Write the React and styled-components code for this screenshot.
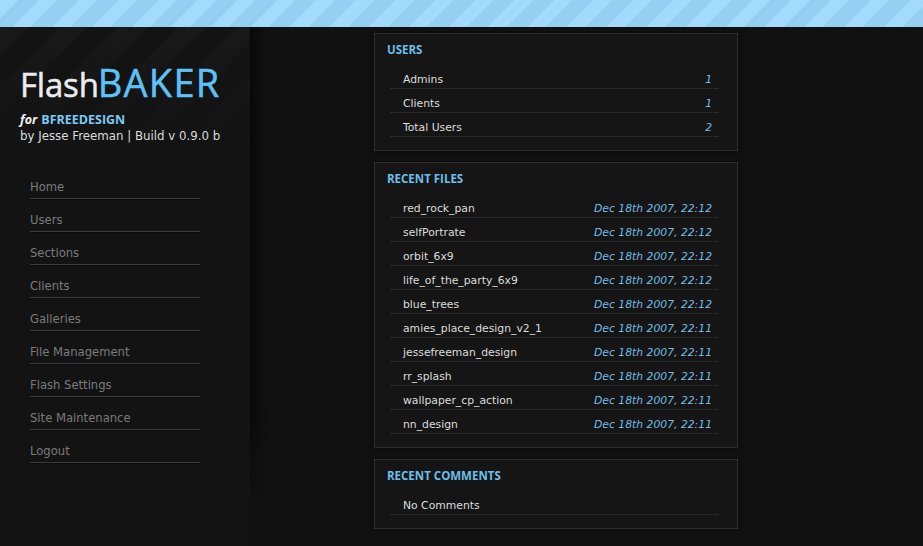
import React from 'react';
import styled, { createGlobalStyle } from 'styled-components';

const GlobalStyle = createGlobalStyle`
  html, body {
    margin: 0;
    padding: 0;
    background: #111111;
  }
  body {
    font-family: "DejaVu Sans", Verdana, sans-serif;
    color: #dddddd;
  }
  * {
    box-sizing: border-box;
  }
`;

const TopBar = styled.div`
  height: 27px;
  background: repeating-linear-gradient(135deg, #a2dbfb 0 13px, #95d0f3 13px 28px);
`;

const Layout = styled.div`
  display: flex;
  align-items: stretch;
  min-height: 519px;
`;

const Sidebar = styled.aside`
  flex: none;
  width: 250px;
  padding: 38px 0 30px 20px;
  background-color: #131313;
  background-image:
    linear-gradient(to bottom, rgba(19, 19, 19, 0) 0, #131313 130px),
    repeating-linear-gradient(135deg, #181818 0 20px, #131313 20px 42px);
`;

/* dark falloff to the right of the sidebar */
const SidebarShade = styled.div`
  flex: none;
  width: 18px;
  background: linear-gradient(to right, #080808 0, #0b0b0b 5px, #111111 18px);
  -webkit-mask-image: linear-gradient(to bottom, #000 0, #000 380px, transparent 470px);
  mask-image: linear-gradient(to bottom, #000 0, #000 380px, transparent 470px);
`;

const Logo = styled.h1`
  margin: 0;
  font-family: "Open Sans", "DejaVu Sans", sans-serif;
  font-weight: 400;
  font-size: 38px;
  line-height: 34px;
  letter-spacing: 1.3px;
  color: #5cc3f6;
  white-space: nowrap;
  -webkit-text-stroke: 0.5px currentColor;
`;

const LogoLight = styled.span`
  font-size: 33px;
  letter-spacing: -0.2px;
  margin-right: -1px;
  color: #ececec;
`;

const Tagline = styled.div`
  margin-top: 10px;
  line-height: 16px;
`;

const ForLine = styled.div`
  font-family: "Open Sans", "DejaVu Sans", sans-serif;
  font-weight: 700;
  font-size: 12.5px;
  color: #7ccaf6;

  em {
    color: #f2f2f2;
    margin-right: 4px;
  }
`;

const Byline = styled.div`
  font-size: 11.8px;
  color: #dcdcdc;
`;

const Nav = styled.nav`
  margin: 22px 0 0 10px;
  width: 170px;
`;

const NavItem = styled.a`
  display: block;
  padding: 14px 0 4px;
  line-height: 14px;
  font-size: 11.6px;
  color: #7b7b7b;
  text-decoration: none;
  border-bottom: 1px solid #3c3c3c;
  box-shadow: 0 1px 0 #0d0d0d;
`;

const Main = styled.main`
  display: flex;
  flex-direction: column;
  gap: 11px;
  padding: 6px 0 16px 106px;
`;

const Panel = styled.section`
  width: 364px;
  padding: 9px 19px 13px 16px;
  background: #151515;
  border: 1px solid #2e2e2e;
  box-shadow: 0 0 4px rgba(0, 0, 0, 0.6);
`;

const PanelTitle = styled.h2`
  margin: 0 0 8px -4px;
  font-family: "Open Sans", "DejaVu Sans", sans-serif;
  font-weight: 700;
  font-size: 11.5px;
  line-height: 14px;
  color: #6dbfea;
  text-transform: uppercase;
`;

const Row = styled.div`
  display: flex;
  justify-content: space-between;
  padding: 8px 6px 2px 12px;
  line-height: 13px;
  font-size: 10.8px;
  color: #dddddd;
  border-bottom: 1px dotted #3a3a3a;
`;

const Value = styled.span`
  font-style: italic;
  color: #72bbe4;
`;

const navLinks = [
  'Home',
  'Users',
  'Sections',
  'Clients',
  'Galleries',
  'File Management',
  'Flash Settings',
  'Site Maintenance',
  'Logout',
];

const userStats = [
  { label: 'Admins', value: '1' },
  { label: 'Clients', value: '1' },
  { label: 'Total Users', value: '2' },
];

const recentFiles = [
  { name: 'red_rock_pan', date: 'Dec 18th 2007, 22:12' },
  { name: 'selfPortrate', date: 'Dec 18th 2007, 22:12' },
  { name: 'orbit_6x9', date: 'Dec 18th 2007, 22:12' },
  { name: 'life_of_the_party_6x9', date: 'Dec 18th 2007, 22:12' },
  { name: 'blue_trees', date: 'Dec 18th 2007, 22:12' },
  { name: 'amies_place_design_v2_1', date: 'Dec 18th 2007, 22:11' },
  { name: 'jessefreeman_design', date: 'Dec 18th 2007, 22:11' },
  { name: 'rr_splash', date: 'Dec 18th 2007, 22:11' },
  { name: 'wallpaper_cp_action', date: 'Dec 18th 2007, 22:11' },
  { name: 'nn_design', date: 'Dec 18th 2007, 22:11' },
];

const App = () => {
  return (
    <>
      <GlobalStyle />
      <TopBar />
      <Layout>
        <Sidebar>
          <Logo>
            <LogoLight>Flash</LogoLight>BAKER
          </Logo>
          <Tagline>
            <ForLine>
              <em>for</em>BFREEDESIGN
            </ForLine>
            <Byline>by Jesse Freeman | Build v 0.9.0 b</Byline>
          </Tagline>
          <Nav>
            {navLinks.map((link) => (
              <NavItem key={link} href="#">
                {link}
              </NavItem>
            ))}
          </Nav>
        </Sidebar>
        <SidebarShade />

        <Main>
          <Panel>
            <PanelTitle>Users</PanelTitle>
            {userStats.map((s) => (
              <Row key={s.label}>
                <span>{s.label}</span>
                <Value>{s.value}</Value>
              </Row>
            ))}
          </Panel>

          <Panel>
            <PanelTitle>Recent Files</PanelTitle>
            {recentFiles.map((f) => (
              <Row key={f.name}>
                <span>{f.name}</span>
                <Value>{f.date}</Value>
              </Row>
            ))}
          </Panel>

          <Panel>
            <PanelTitle>Recent Comments</PanelTitle>
            <Row>
              <span>No Comments</span>
            </Row>
          </Panel>
        </Main>
      </Layout>
    </>
  );
};

export default App;
